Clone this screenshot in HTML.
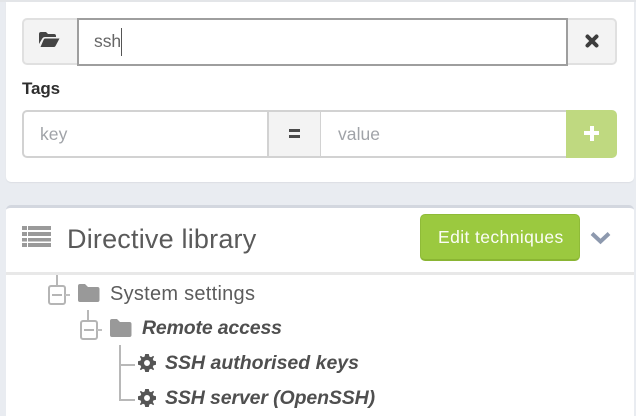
<!DOCTYPE html>
<html>
<head>
<meta charset="utf-8">
<style>
html,body{margin:0;padding:0;width:636px;height:416px;overflow:hidden}
body{background:#e9ecf1;position:relative;font-family:"Liberation Sans",sans-serif;color:#555}
div,span,svg{position:absolute;box-sizing:border-box}
.t{white-space:nowrap;line-height:1}
</style>
</head>
<body>
<div style="left:0;top:0;width:636px;height:2px;background:#e3e5e8"></div>
<div style="left:6px;top:2px;width:628px;height:180px;background:#fff;border-radius:0 0 5px 5px;box-shadow:0 1px 1px #dcdfe4"></div>

<div style="left:22px;top:18px;width:57px;height:47px;background:#f3f3f3;border:2px solid #e0e0e0;border-right:0;border-radius:5px 0 0 5px"></div>
<svg style="left:39px;top:32px" width="21" height="15" viewBox="0 0 21 15"><path fill="#444" d="M0 2Q0 0 2 0H7L9 2H15Q17 2 17 4V5H6Q4 5 3 7L0 12Z"/><path fill="#444" d="M6 6.500H20.500L16.500 14Q16 15 15 15H1.500L4.500 8Q5 6.500 6 6.500Z"/></svg>
<div style="left:77px;top:18px;width:491px;height:48px;background:#fff;border:2px solid #9e9e9e"></div>
<div class="t" style="left:94px;top:33px;font-size:17.500px;letter-spacing:-.05px;color:#666">ssh</div>
<div style="left:121px;top:28px;width:1px;height:28px;background:#555"></div>
<div style="left:568px;top:18px;width:49px;height:47px;background:#f3f3f3;border:2px solid #e0e0e0;border-left:0;border-radius:0 5px 5px 0"></div>
<svg style="left:585px;top:34px" width="14" height="14" viewBox="0 0 14 14"><path stroke="#3d3d3d" stroke-width="4" stroke-linecap="round" d="M2.500 2.500L11.500 11.500M11.500 2.500L2.500 11.500"/></svg>

<div class="t" style="left:22px;top:80px;font-size:17px;font-weight:bold;color:#2e2e2e;letter-spacing:-.1px">Tags</div>

<div style="left:22px;top:110px;width:247px;height:48px;background:#fff;border:2px solid #d2d2d2;border-right:0;border-radius:5px 0 0 5px"></div>
<div class="t" style="left:40px;top:126px;font-size:17.500px;letter-spacing:.05px;color:#a0a3a8">key</div>
<div style="left:267px;top:110px;width:55px;height:48px;background:#f3f3f3;border:2px solid #d2d2d2"></div>
<div style="left:289px;top:129px;width:11px;height:3px;background:#4a4a4a"></div>
<div style="left:289px;top:135px;width:11px;height:3px;background:#4a4a4a"></div>
<div style="left:321px;top:110px;width:246px;height:48px;background:#fff;border:2px solid #d2d2d2;border-left:0;border-right:0"></div>
<div class="t" style="left:338px;top:126px;font-size:17.500px;letter-spacing:.05px;color:#a0a3a8">value</div>
<div style="left:566px;top:110px;width:51px;height:48px;background:#bfd980;border-radius:0 5px 5px 0"></div>
<div style="left:584px;top:131px;width:15px;height:4px;background:#fff"></div>
<div style="left:589.500px;top:125.500px;width:4px;height:15px;background:#fff"></div>

<div style="left:6px;top:205px;width:628px;height:211px;background:#fff;border-top:3px solid #d3d7df;border-radius:5px 5px 0 0"></div>
<div style="left:6px;top:272px;width:628px;height:3px;background:#e8e8e8"></div>

<svg style="left:22px;top:225px" width="30" height="24" viewBox="0 0 30 24" fill="#9a9a9a"><rect x="0" y="1" width="5" height="4"/><rect x="6" y="1" width="23" height="4"/><rect x="0" y="7" width="5" height="4"/><rect x="6" y="7" width="23" height="4"/><rect x="0" y="13" width="5" height="3.500"/><rect x="6" y="13" width="23" height="3.500"/><rect x="0" y="18" width="5" height="4"/><rect x="6" y="18" width="23" height="4"/></svg>
<div class="t" style="left:67px;top:226px;font-size:27px;color:#5a5a5a;letter-spacing:.2px">Directive library</div>

<div style="left:420px;top:214px;width:160px;height:47px;background:#9bc93f;border:1px solid #8fbb38;border-bottom:2px solid #8ab533;border-radius:5px"></div>
<div class="t" style="left:438px;top:229px;font-size:17.500px;color:#fbfdf5;letter-spacing:.4px">Edit techniques</div>
<svg style="left:590px;top:231px" width="22" height="14" viewBox="0 0 22 14"><path fill="none" stroke="#8d99ae" stroke-width="4" d="M2 2.500L10.500 10.500L19 2.500"/></svg>

<!-- tree -->
<div style="left:56px;top:275px;width:2px;height:11px;background:#b8b8b8"></div>
<div style="left:48px;top:285px;width:18px;height:20px;border:2px solid #b5b5b5;border-radius:3px;background:#fff"></div>
<div style="left:52px;top:294px;width:10px;height:2px;background:#b5b5b5"></div>
<div style="left:65px;top:294px;width:5px;height:2px;background:#c0c0c0"></div>
<svg style="left:78px;top:284px" width="22" height="18" viewBox="0 0 22 18"><path fill="#999" d="M0 2Q0 0 2 0H7L10 3H19.500Q21.500 3 21.500 5V16Q21.500 18 19.500 18H2Q0 18 0 16Z"/></svg>
<div class="t" style="left:110px;top:284px;font-size:20px;color:#5c5c5c;letter-spacing:.27px">System settings</div>

<div style="left:87px;top:310px;width:2px;height:11px;background:#b8b8b8"></div>
<div style="left:80px;top:320px;width:18px;height:20px;border:2px solid #b5b5b5;border-radius:3px;background:#fff"></div>
<div style="left:84px;top:329px;width:10px;height:2px;background:#b5b5b5"></div>
<div style="left:97px;top:329px;width:5px;height:2px;background:#c0c0c0"></div>
<svg style="left:110px;top:319px" width="22" height="18" viewBox="0 0 22 18"><path fill="#999" d="M0 2Q0 0 2 0H7L10 3H19.500Q21.500 3 21.500 5V16Q21.500 18 19.500 18H2Q0 18 0 16Z"/></svg>
<div class="t" style="left:142px;top:319px;font-size:19.500px;font-weight:bold;font-style:italic;color:#4f4f4f;letter-spacing:-.17px">Remote access</div>

<div style="left:119px;top:345px;width:2px;height:56px;background:#b8b8b8"></div>
<div style="left:119px;top:364px;width:16px;height:2px;background:#b8b8b8"></div>
<div style="left:119px;top:399px;width:16px;height:2px;background:#b8b8b8"></div>

<svg style="left:138px;top:354px" width="18" height="18" viewBox="0 0 20 20"><g fill="#555"><path fill-rule="evenodd" d="M8 0H12L12.600 2.800L14.500 3.600L16.900 2.100L17.900 3.100L16.400 5.500L17.200 7.400L20 8V12L17.200 12.600L16.400 14.500L17.900 16.900L16.900 17.900L14.500 16.400L12.600 17.200L12 20H8L7.400 17.200L5.500 16.400L3.100 17.900L2.100 16.900L3.600 14.500L2.800 12.600L0 12V8L2.800 7.400L3.600 5.500L2.100 3.100L3.100 2.100L5.500 3.600L7.400 2.800ZM10 6.700A3.300 3.300 0 1 0 10 13.300A3.300 3.300 0 1 0 10 6.700Z"/></g></svg>
<div class="t" style="left:165px;top:354px;font-size:19.500px;font-weight:bold;font-style:italic;color:#4f4f4f;letter-spacing:0">SSH authorised keys</div>

<svg style="left:138px;top:389px" width="18" height="18" viewBox="0 0 20 20"><g fill="#555"><path fill-rule="evenodd" d="M8 0H12L12.600 2.800L14.500 3.600L16.900 2.100L17.900 3.100L16.400 5.500L17.200 7.400L20 8V12L17.200 12.600L16.400 14.500L17.900 16.900L16.900 17.900L14.500 16.400L12.600 17.200L12 20H8L7.400 17.200L5.500 16.400L3.100 17.900L2.100 16.900L3.600 14.500L2.800 12.600L0 12V8L2.800 7.400L3.600 5.500L2.100 3.100L3.100 2.100L5.500 3.600L7.400 2.800ZM10 6.700A3.300 3.300 0 1 0 10 13.300A3.300 3.300 0 1 0 10 6.700Z"/></g></svg>
<div class="t" style="left:165px;top:389px;font-size:19.500px;font-weight:bold;font-style:italic;color:#4f4f4f;letter-spacing:-.12px">SSH server (OpenSSH)</div>
</body>
</html>
